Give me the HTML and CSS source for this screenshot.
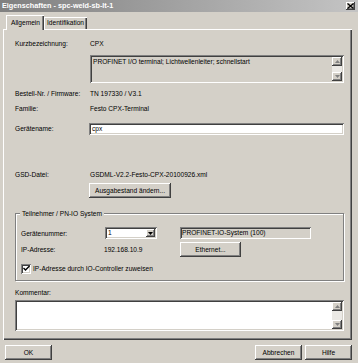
FILE: index.html
```html
<!DOCTYPE html>
<html lang="de">
<head>
  <meta charset="UTF-8" />
  <title>Eigenschaften - spc-weld-sb-lt-1</title>
  <link rel="stylesheet" href="styles.css">
</head>
<body>
<div class="window">

  <!-- title bar -->
  <div class="titlebar">
    <span class="title">Eigenschaften - spc-weld-sb-lt-1</span>
    <span class="close">
      <svg width="7" height="6" viewBox="0 0 7 6"><path d="M0.5 0.5L6.5 5.5M6.5 0.5L0.5 5.5" stroke="#000" stroke-width="1.3" fill="none"/></svg>
    </span>
  </div>

  <!-- tabs -->
  <div class="tabs">
    <div class="tab active">Allgemein</div>
    <div class="tab">Identifikation</div>
  </div>

  <div class="panel">
    <div class="row">
      <span class="label">Kurzbezeichnung:</span>
      <span>CPX</span>
    </div>
    <div class="memo memo-info">
      <div class="memo-text">PROFINET I/O terminal; Lichtwellenleiter; schnellstart</div>
      <div class="vscroll">
        <span class="sbtn"><svg width="5" height="3" viewBox="0 0 5 3"><path d="M2.5 0L5 3H0z" fill="#808080"/></svg></span>
        <span class="track"></span>
        <span class="sbtn"><svg width="5" height="3" viewBox="0 0 5 3"><path d="M0 0H5L2.5 3z" fill="#808080"/></svg></span>
      </div>
    </div>

    <div class="row gap-5">
      <span class="label">Bestell-Nr. / Firmware:</span>
      <span>TN 197330 / V3.1</span>
    </div>
    <div class="row gap-3">
      <span class="label">Familie:</span>
      <span>Festo CPX-Terminal</span>
    </div>
    <div class="row gap-8">
      <span class="label">Gerätename:</span>
      <span class="field name-field">cpx</span>
    </div>

    <div class="row gap-34">
      <span class="label">GSD-Datei:</span>
      <span>GSDML-V2.2-Festo-CPX-20100926.xml</span>
    </div>
    <div class="btn-row">
      <button class="btn btn-gsd">Ausgabestand ändern...</button>
    </div>

    <div class="group">
      <span class="group-title">Teilnehmer / PN-IO System</span>
      <div class="grow g-first">
        <span class="glabel">Gerätenummer:</span>
        <span class="gcol">
          <span class="combo">
            <span class="combo-val">1</span>
            <span class="combo-btn"><svg width="5" height="3" viewBox="0 0 5 3"><path d="M0 0H5L2.5 3z" fill="#000"/></svg></span>
          </span>
        </span>
        <span class="field ro-field">PROFINET-IO-System (100)</span>
      </div>
      <div class="grow g-ip">
        <span class="glabel">IP-Adresse:</span>
        <span class="gcol ip">192.168.10.9</span>
        <button class="btn btn-eth">Ethernet...</button>
      </div>
      <div class="grow g-check">
        <span class="check">
          <svg width="7" height="7" viewBox="0 0 7 7"><path d="M0.5 3L2.5 5L6.5 1" stroke="#000" stroke-width="1.4" fill="none"/></svg>
        </span>
        <span>IP-Adresse durch IO-Controller zuweisen</span>
      </div>
    </div>

    <div class="row gap-6">
      <span class="label">Kommentar:</span>
    </div>
    <div class="memo memo-comment">
      <div class="memo-text"></div>
      <div class="vscroll">
        <span class="sbtn"><svg width="5" height="3" viewBox="0 0 5 3"><path d="M2.5 0L5 3H0z" fill="#808080"/></svg></span>
        <span class="track"></span>
        <span class="sbtn"><svg width="5" height="3" viewBox="0 0 5 3"><path d="M0 0H5L2.5 3z" fill="#808080"/></svg></span>
      </div>
    </div>
  </div>

  <!-- dialog buttons -->
  <div class="footer">
    <button class="btn btn-foot">OK</button>
    <span class="spacer"></span>
    <button class="btn btn-foot">Abbrechen</button>
    <button class="btn btn-foot">Hilfe</button>
  </div>
</div>
</body>
</html>
```

FILE: styles.css
```css
html, body {
  margin: 0;
  padding: 0;
}
body {
  font-family: "Liberation Sans", Arial, sans-serif;
  font-size: 6.6px;
  color: #000;
  background: #d4d0c8;
}
.window {
  width: 358px;
  height: 363px;
  background: #d4d0c8;
  overflow: hidden;
}

/* title bar */
.titlebar {
  height: 12px;
  display: flex;
  align-items: center;
  background: linear-gradient(to right, #808080, #c4c4c4);
  padding: 0 3px 0 2px;
}
.title {
  flex: 1;
  color: #fff;
  font-weight: bold;
  font-size: 7.25px;
  line-height: 12px;
}
.close {
  width: 9px;
  height: 8px;
  display: flex;
  align-items: center;
  justify-content: center;
  background: #d4d0c8;
  box-shadow: inset -1px -1px #404040, inset 1px 1px #fff, inset -2px -2px #808080;
}

/* tabs */
.tabs {
  height: 17px;
  display: flex;
  align-items: flex-end;
  padding-left: 6px;
}
.tab {
  height: 12px;
  line-height: 12px;
  padding: 0 3px;
  background: #d4d0c8;
  box-shadow: inset 1px 1px #fff, inset -1px 0 #404040, inset -2px 0 #808080;
}
.tab:first-child { width: 38px; box-sizing: border-box; padding-left: 5px; }
.tab + .tab { width: 43px; box-sizing: border-box; }
.tab.active {
  height: 15px;
  line-height: 15px;
  margin-bottom: -1px;
  position: relative;
  z-index: 1;
  box-shadow: inset 1px 1px #fff, inset -1px 0 #404040, inset -2px 0 #808080;
}

/* panel */
.panel {
  margin-left: 3px;
  width: 349px;
  height: 311px;
  box-sizing: border-box;
  padding: 9px 0 0 12px;
  box-shadow: inset 1px 1px #fff, inset -1px -1px #404040, inset -2px -2px #808080;
}
.row {
  display: flex;
  height: 12px;
  line-height: 12px;
  white-space: nowrap;
}
.label {
  width: 75px;
  flex: none;
}
.gap-3 { margin-top: 3px; }
.gap-5 { margin-top: 5px; }
.gap-6 { margin-top: 6px; }
.gap-8 { margin-top: 8px; }
.gap-34 { margin-top: 34px; }

.field {
  display: block;
  height: 12px;
  line-height: 12px;
  box-sizing: border-box;
  padding-left: 3px;
  background: #fff;
  box-shadow: inset 1px 1px #808080, inset -1px -1px #fff, inset 2px 2px #404040, inset -2px -2px #d4d0c8;
}
.name-field {
  width: 255px;
  margin-left: -1px;
}
.ro-field {
  width: 131px;
  background: #d4d0c8;
  padding-left: 2px;
}

/* multi line boxes */
.memo {
  display: flex;
  box-sizing: border-box;
  padding: 2px;
  box-shadow: inset 1px 1px #808080, inset -1px -1px #fff, inset 2px 2px #404040, inset -2px -2px #d4d0c8;
}
.memo-info {
  margin: 5px 0 0 75px;
  width: 254px;
  height: 28px;
}
.memo-comment {
  margin-top: 1px;
  width: 329px;
  height: 31px;
  background: #fff;
}
.memo-text {
  flex: 1;
  line-height: 9px;
  padding-left: 1px;
}
.vscroll {
  width: 10px;
  display: flex;
  flex-direction: column;
}
.sbtn {
  height: 9px;
  display: flex;
  align-items: center;
  justify-content: center;
  background: #d4d0c8;
  box-shadow: inset -1px -1px #404040, inset 1px 1px #fff, inset -2px -2px #808080;
}
.track {
  flex: 1;
  background: #ebe9e5;
}

/* buttons */
.btn {
  display: block;
  margin: 0;
  padding: 0;
  border: none;
  height: 15px;
  font: inherit;
  color: #000;
  background: #d4d0c8;
  box-shadow: inset -1px -1px #404040, inset 1px 1px #fff, inset -2px -2px #808080;
}
.btn-row {
  margin: 2px 0 0 74px;
  height: 15px;
}
.btn-gsd { width: 82px; }
.btn-eth { width: 61px; }

/* group box */
.group {
  position: relative;
  margin-top: 15px;
  width: 329px;
  height: 68px;
  box-sizing: border-box;
  border: 1px solid #808080;
  box-shadow: 1px 1px #fff, inset 1px 1px #fff;
  padding: 0 5px;
}
.group-title {
  position: absolute;
  top: -6px;
  left: 4px;
  padding: 0 2px;
  line-height: 12px;
  background: #d4d0c8;
}
.grow {
  display: flex;
  align-items: center;
  white-space: nowrap;
}
.g-first { margin-top: 13px; height: 12px; }
.g-ip { margin-top: 3px; height: 15px; }
.g-check { margin-top: 6px; height: 11px; }
.glabel {
  width: 84px;
  flex: none;
}
.gcol {
  width: 75px;
  flex: none;
}
.ip { margin-left: -1px; width: 76px; }
.combo {
  display: flex;
  width: 52px;
  height: 12px;
  box-sizing: border-box;
  padding: 2px;
  background: #fff;
  box-shadow: inset 1px 1px #808080, inset -1px -1px #fff, inset 2px 2px #404040, inset -2px -2px #d4d0c8;
}
.combo-val {
  flex: 1;
  line-height: 8px;
  padding-left: 1px;
}
.combo-btn {
  width: 9px;
  display: flex;
  align-items: center;
  justify-content: center;
  background: #d4d0c8;
  box-shadow: inset -1px -1px #404040, inset 1px 1px #fff, inset -2px -2px #808080;
}
.check {
  width: 10px;
  height: 10px;
  margin-right: 2px;
  display: flex;
  align-items: center;
  justify-content: center;
  background: #fff;
  box-shadow: inset 1px 1px #808080, inset -1px -1px #fff, inset 2px 2px #404040, inset -2px -2px #d4d0c8;
}

/* footer */
.footer {
  display: flex;
  padding: 5px 6px 0 5px;
  gap: 3px;
}
.spacer { flex: 1; }
.btn-foot { width: 47px; }
```
